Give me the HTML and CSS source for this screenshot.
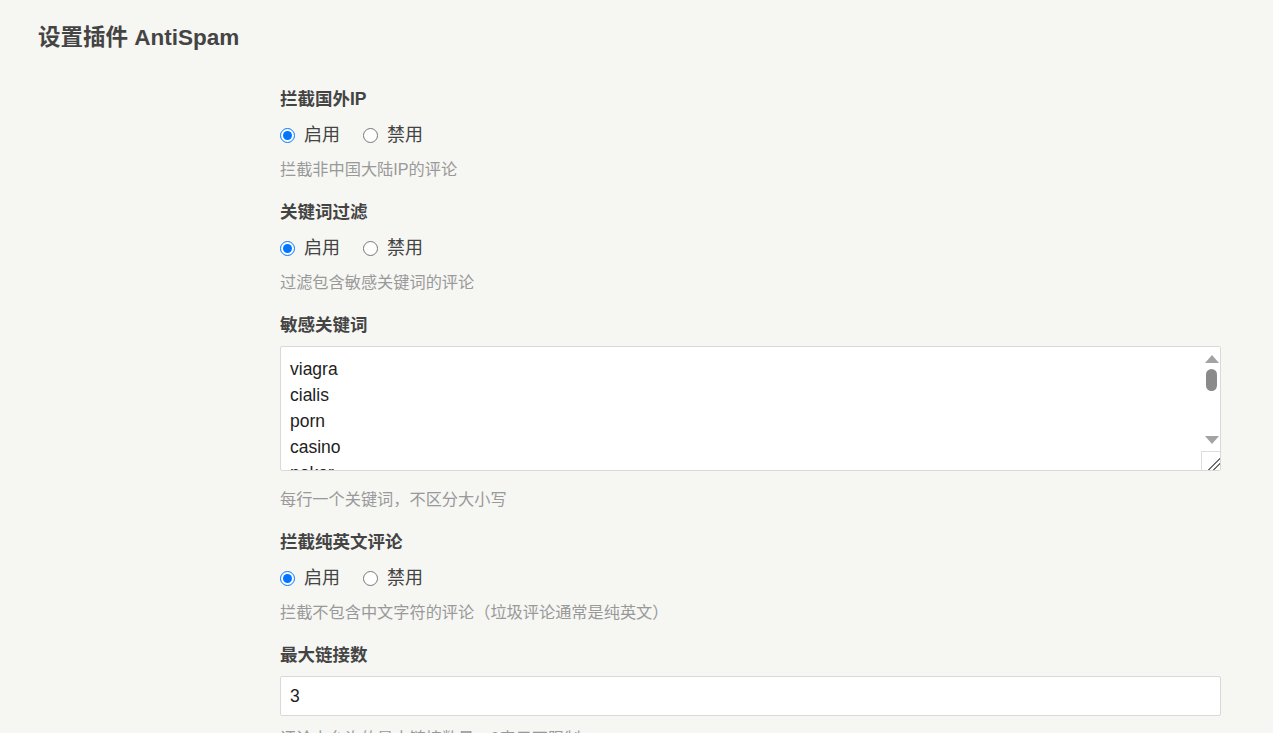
FILE: index.html
```html
<!DOCTYPE html>
<html lang="zh-CN">

<head>
  <meta charset="utf-8" />
  <meta name="viewport" content="width=device-width, initial-scale=1.0" />
  <title>设置插件 AntiSpam</title>
  <link rel="stylesheet" href="styles.css">
</head>

<body>
  <div class="typecho-head">
    <h2>设置插件 AntiSpam</h2>
  </div>

  <form class="typecho-option-form">
    <ul class="typecho-option">
      <li>
        <label class="typecho-label">拦截国外IP</label>
        <div class="radios">
          <span class="radio"><input type="radio" name="foreignIp" id="foreignIp-1" checked /><label for="foreignIp-1">启用</label></span>
          <span class="radio"><input type="radio" name="foreignIp" id="foreignIp-0" /><label for="foreignIp-0">禁用</label></span>
        </div>
        <p class="description">拦截非中国大陆IP的评论</p>
      </li>
    </ul>

    <ul class="typecho-option">
      <li>
        <label class="typecho-label">关键词过滤</label>
        <div class="radios">
          <span class="radio"><input type="radio" name="keywords" id="keywords-1" checked /><label for="keywords-1">启用</label></span>
          <span class="radio"><input type="radio" name="keywords" id="keywords-0" /><label for="keywords-0">禁用</label></span>
        </div>
        <p class="description">过滤包含敏感关键词的评论</p>
      </li>
    </ul>

    <ul class="typecho-option">
      <li>
        <label class="typecho-label" for="words">敏感关键词</label>
        <div class="area-wrap">
          <textarea id="words" class="text-area">viagra
cialis
porn
casino
poker
loan
bitcoin
replica</textarea>
          <div class="scrollbar">
            <span class="sb-up"></span>
            <span class="sb-thumb"></span>
            <span class="sb-down"></span>
          </div>
          <div class="resizer"></div>
        </div>
        <p class="description after-area">每行一个关键词，不区分大小写</p>
      </li>
    </ul>

    <ul class="typecho-option">
      <li>
        <label class="typecho-label">拦截纯英文评论</label>
        <div class="radios">
          <span class="radio"><input type="radio" name="english" id="english-1" checked /><label for="english-1">启用</label></span>
          <span class="radio"><input type="radio" name="english" id="english-0" /><label for="english-0">禁用</label></span>
        </div>
        <p class="description">拦截不包含中文字符的评论（垃圾评论通常是纯英文）</p>
      </li>
    </ul>

    <ul class="typecho-option">
      <li>
        <label class="typecho-label" for="maxLinks">最大链接数</label>
        <input type="text" id="maxLinks" class="text" value="3" />
        <p class="description">评论中允许的最大链接数量，0表示不限制</p>
      </li>
    </ul>
  </form>
</body>

</html>
```

FILE: styles.css
```css
* {
  box-sizing: border-box;
}

html,
body {
  margin: 0;
  padding: 0;
  background-color: #f6f6f3;
  color: #444;
  font-family: "Liberation Sans", "Noto Sans CJK SC", sans-serif;
  font-size: 17.5px;
}

.typecho-head {
  padding: 23px 0 0 38px;
}

.typecho-head h2 {
  margin: 0;
  font-size: 22.5px;
  line-height: 30px;
  font-weight: bold;
  color: #444;
}

.typecho-option-form {
  width: 941px;
  margin: 34px 0 0 280px;
}

.typecho-option {
  list-style: none;
  margin: 0 0 19px;
  padding: 0;
}

.typecho-option li {
  display: flex;
  flex-direction: column;
}

.typecho-label {
  display: block;
  font-weight: bold;
  line-height: 24px;
  color: #444;
}

.radios {
  display: flex;
  align-items: center;
  gap: 23px;
  margin-top: 12px;
  line-height: 24px;
  font-size: 18px;
}

.radio {
  display: flex;
  align-items: center;
}

.radio input {
  width: 15px;
  height: 15px;
  margin: 0 9px 0 0;
}

.radio label {
  color: #444;
}

.description {
  margin: 10px 0 0;
  font-size: 16.2px;
  line-height: 24px;
  color: #999;
}

.description.after-area {
  margin-top: 16px;
}

.area-wrap {
  position: relative;
  margin-top: 9px;
}

.text-area {
  display: block;
  width: 100%;
  height: 125px;
  padding: 9px 26px 9px 9px;
  border: 1px solid #d9d9d6;
  border-radius: 2px;
  background: #fff;
  color: #222;
  font-family: "Liberation Sans", "Noto Sans CJK SC", sans-serif;
  font-size: 17.5px;
  line-height: 26px;
  overflow: hidden;
  resize: none;
}

/* drawn scrollbar, sits over the textarea's right edge */
.scrollbar {
  position: absolute;
  top: 1px;
  right: 1px;
  bottom: 20px;
  width: 17px;
  display: flex;
  flex-direction: column;
  align-items: center;
  padding: 8px 0 7px;
  background: #fff;
}

.sb-up {
  width: 0;
  height: 0;
  border-left: 7px solid transparent;
  border-right: 7px solid transparent;
  border-bottom: 8px solid #a3a3a3;
}

.sb-thumb {
  width: 11px;
  height: 22px;
  margin-top: 6px;
  border-radius: 6px;
  background: #8a8a8a;
}

.sb-down {
  width: 0;
  height: 0;
  margin-top: auto;
  border-left: 7px solid transparent;
  border-right: 7px solid transparent;
  border-top: 8px solid #a3a3a3;
}

.resizer {
  position: absolute;
  right: 1px;
  bottom: 1px;
  width: 19px;
  height: 19px;
  border-left: 1px solid #dcdcdc;
  border-top: 1px solid #dcdcdc;
  background-color: #fff;
  background-image: linear-gradient(135deg, transparent 66%, #6f6f6f 66%, #6f6f6f 71%, transparent 71%, transparent 80%, #6f6f6f 80%, #6f6f6f 85%, transparent 85%);
}

.text {
  display: block;
  width: 100%;
  height: 40px;
  margin-top: 9px;
  padding: 0 9px;
  border: 1px solid #d9d9d6;
  border-radius: 2px;
  background: #fff;
  color: #222;
  font-family: "Liberation Sans", "Noto Sans CJK SC", sans-serif;
  font-size: 17.5px;
}
```
